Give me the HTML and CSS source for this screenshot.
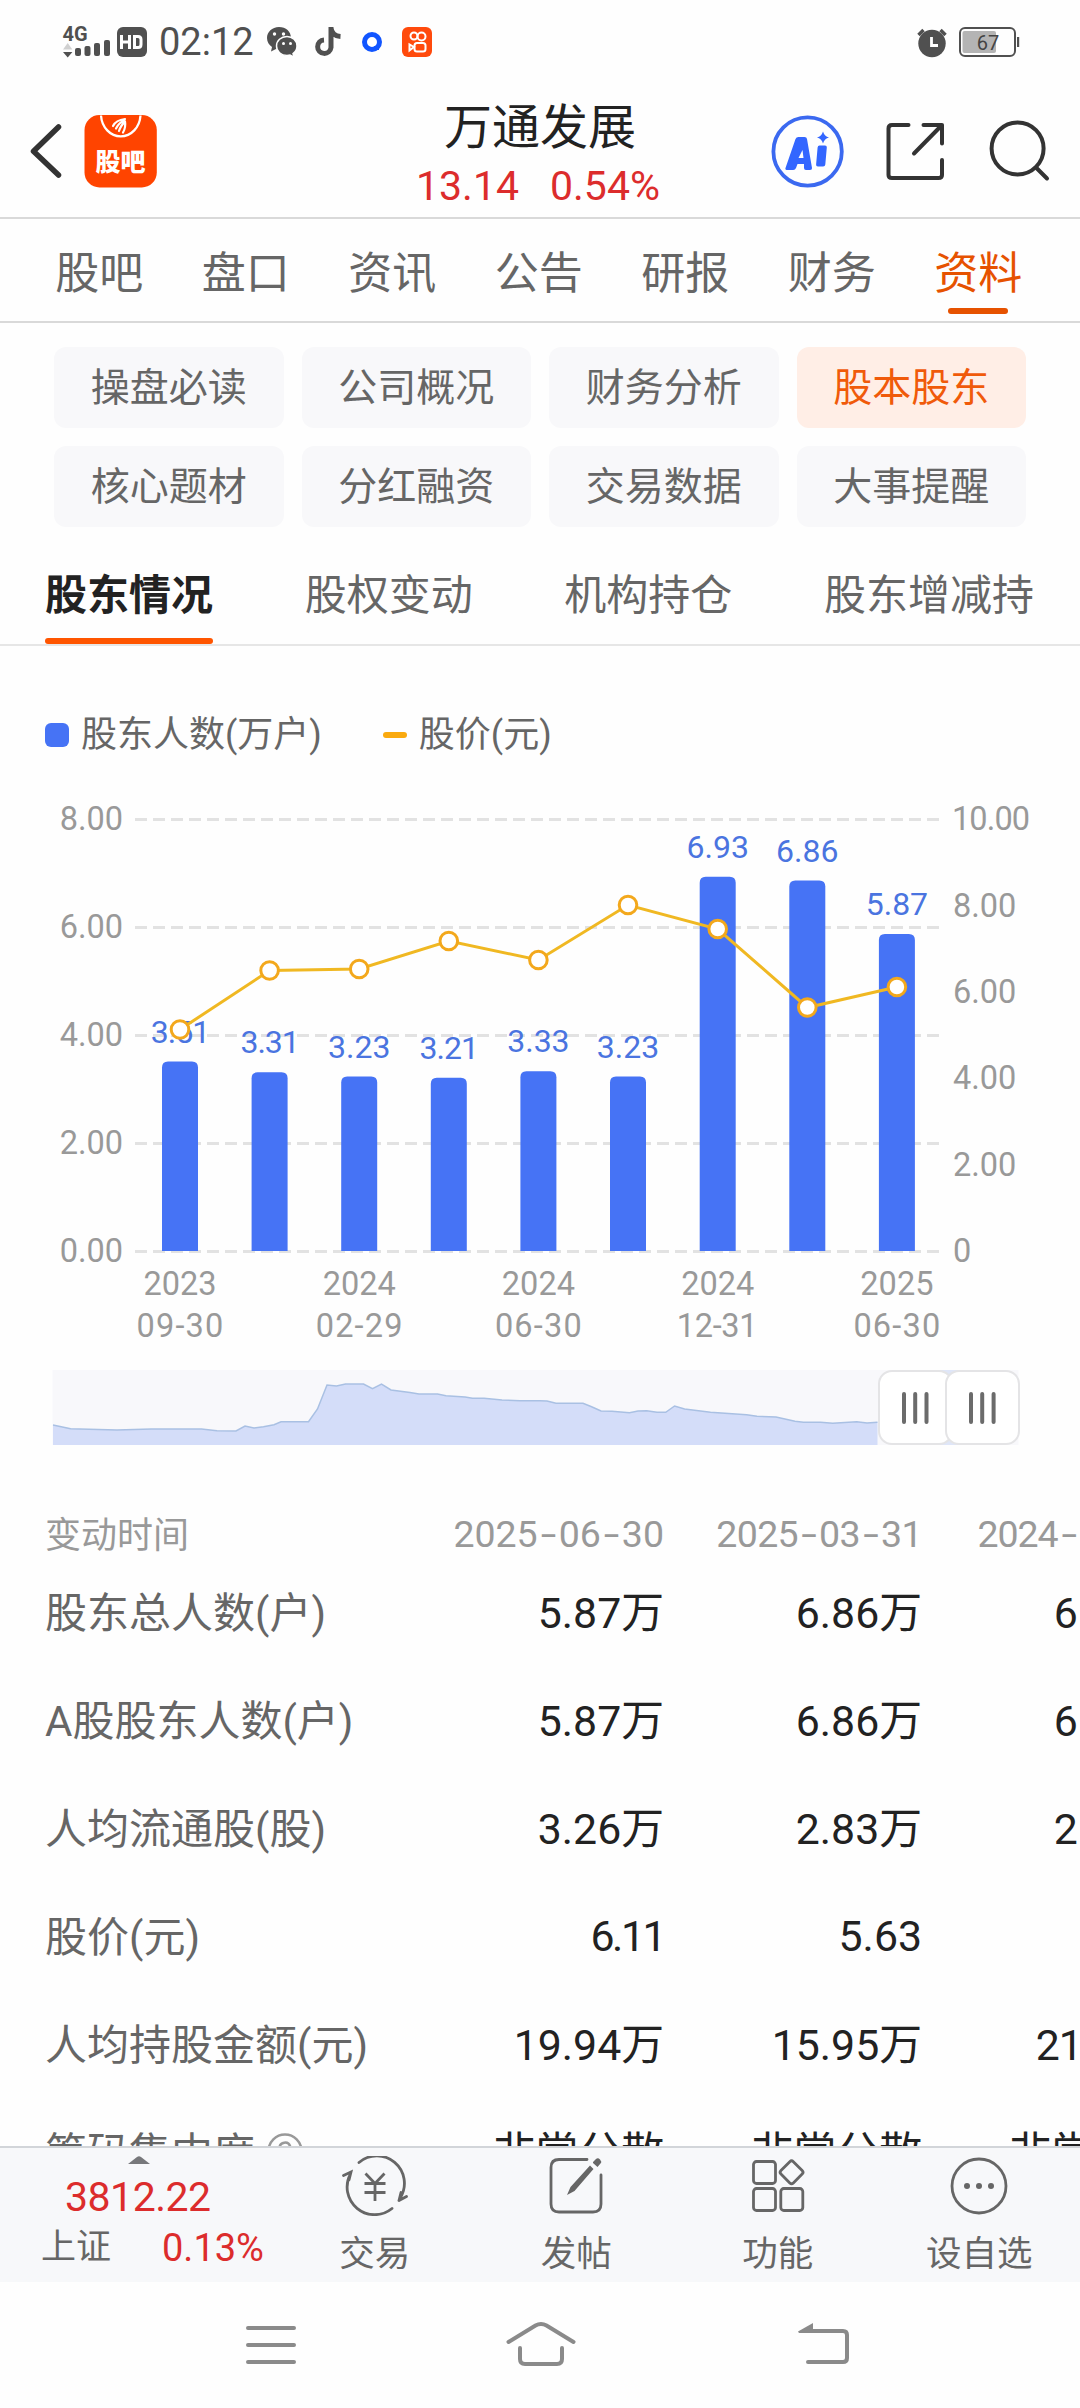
FILE: index.html
```html
<!DOCTYPE html>
<html lang="zh-CN">
<head>
<meta charset="utf-8">
<title>万通发展 股东情况</title>
<link rel="stylesheet" href="styles.css">
</head>
<body>
<div class="screen">
  <div class="status">
    <svg class="status-left" width="90" height="40" viewBox="60 22 90 40">
      <text class="net" x="62.500" y="41">4G</text>
      <path d="M63 49.500l4.700-6.500 4.700 6.500z" fill="#d0d0d0"/><path d="M63 52h9.400l-4.700 5.500z" fill="#505050"/>
      <g fill="#505050"><rect x="75" y="48" width="6" height="8" rx="2"/><rect x="84.500" y="46" width="6" height="10" rx="2"/><rect x="94" y="43" width="6" height="13" rx="2"/><rect x="104" y="40" width="6" height="16" rx="2"/><rect x="117" y="27" width="30" height="30" rx="6"/></g>
      <path d="M121.500 35v14M129.500 35v14M121.500 42h8M134.500 36.500h3.500q3 0 3 3v5q0 3-3 3h-3.500z" fill="none" stroke="#fff" stroke-width="3"/>
    </svg>
    <span class="clock">02:12</span>
    <svg class="apps" width="170" height="40" viewBox="264 22 170 40">
      <g fill="#505050">
        <path d="M279 27c-7 0-12 5-12 11 0 4 2 7 5 9l-1 4.500 5-2.500 3 .5c7 0 12-5 12-11.500S286 27 279 27z"/>
        <path d="M287 36.500c-6 0-10.500 4.200-10.500 9.500s4.500 9.500 10.500 9.500l3-.4 4 2-1-3.500c2.500-1.800 4-4.500 4-7.600 0-5.300-4.500-9.500-10-9.500z" stroke="#fff" stroke-width="1.500"/>
      </g>
      <g fill="#fff"><circle cx="274.500" cy="34" r="1.700"/><circle cx="283.500" cy="34" r="1.700"/><circle cx="283.500" cy="43.500" r="1.500"/><circle cx="290.500" cy="43.500" r="1.500"/></g>
      <path d="M331 27v20.500a6.700 6.700 0 1 1-7-7.500M331 28q1 8 9.500 8.500" fill="none" stroke="#505050" stroke-width="5"/>
      <circle cx="372" cy="42" r="7.500" fill="#fff" stroke="#1155ff" stroke-width="5"/><path d="M374 50v-4h5v4z" fill="#1155ff"/>
      <rect x="402" y="27" width="30" height="30" rx="6" fill="#ff4a0c"/>
      <g fill="none" stroke="#fff" stroke-width="2"><circle cx="414" cy="36" r="3.500"/><circle cx="421.500" cy="36.500" r="4"/><rect x="414.500" y="43" width="11" height="8.500" rx="2.500"/><path d="M414 47l-4.500-2.500v6z"/></g>
    </svg>
    <svg class="status-right" width="104" height="40" viewBox="917 22 104 40">
      <circle cx="933" cy="43.500" r="13.700" fill="#505050"/><path d="M919.500 35l5-5M946.500 35l-5-5" stroke="#505050" stroke-width="3.500"/><path d="M932.500 37v8.500h6.500" fill="none" stroke="#fff" stroke-width="2.800"/>
      <rect x="961" y="28" width="55" height="28" rx="5" fill="none" stroke="#505050" stroke-width="2"/><rect x="963.500" y="31" width="33.500" height="22" rx="2" fill="#b4b4b4"/><rect x="1018" y="37" width="2.200" height="10" fill="#505050"/>
      <text class="batt" x="989" y="49.500" text-anchor="middle">67</text>
    </svg>
  </div>

  <header class="head">
    <svg width="130" height="80" viewBox="28 111 130 80">
      <path d="M58.500 127L33.500 151.300l25 23.700" fill="none" stroke="#333" stroke-width="5.500" stroke-linecap="round" stroke-linejoin="round"/>
      <rect x="84.500" y="115" width="72.300" height="72.500" rx="15" fill="#ff4400"/>
      <path d="M101 115.500a19.800 22.500 0 0 0 39.500 0" fill="none" stroke="#fff" stroke-width="2.300"/>
      <path d="M113 126q3-6 12-7M116 128.500q3-6 8.500-8M119 131q2-6 6-9M123 132.500q3-5 2-11" fill="none" stroke="#fff" stroke-width="2.200" stroke-linecap="round"/>
      <text class="logo" x="120.500" y="171" text-anchor="middle">股吧</text>
    </svg>
    <div class="quote">
      <h1>万通发展</h1>
      <p><span>13.14</span><span>0.54%</span></p>
    </div>
    <svg class="tools" width="282" height="80" viewBox="771 111 282 80">
      <circle cx="808.600" cy="151.500" r="34.200" fill="none" stroke="#3b69f0" stroke-width="3.800"/>
      <path d="M786.500 168l10-29q.8-2 3-2h6q2.200 0 2.500 2l5 29q.3 2-2 2h-4q-2 0-2-2v-4h-6.500l-1.500 4q-.8 2-2.800 2h-5.500q-3 0-2.200-2zM799.500 158h5l-1-8z" fill="#3366ff" fill-rule="evenodd"/>
      <path d="M820.500 145.500h5.500q2 0 1.800 2l-1.500 17q-.2 2-2.200 2h-5.200q-2 0-1.800-2l1.500-17q.2-2 1.900-2zM824 131.500q1.500 5 6 6-4.500 1-6 6-1.500-5-6-6 4.500-1 6-6z" fill="#3366ff"/>
      <g fill="none" stroke="#333" stroke-width="4" stroke-linecap="round" stroke-linejoin="round">
        <path d="M909.500 125H893q-3.500 0-3.500 3.500V175q0 3 3.500 3h46.500q3.500 0 3.500-3v-15M924.500 125H943v18.500M943 125l-28 28.500"/>
        <circle cx="1018.600" cy="148.500" r="26"/><path d="M1037.500 168l10.500 10.500"/>
      </g>
    </svg>
  </header>

  <nav class="tabs"><a>股吧</a><a>盘口</a><a>资讯</a><a>公告</a><a>研报</a><a>财务</a><a class="on">资料</a></nav>

  <nav class="chips"><a>操盘必读</a><a>公司概况</a><a>财务分析</a><a class="on">股本股东</a><a>核心题材</a><a>分红融资</a><a>交易数据</a><a>大事提醒</a></nav>

  <nav class="subtabs"><a class="on">股东情况</a><a>股权变动</a><a>机构持仓</a><a>股东增减持</a></nav>

  <div class="legend"><i class="sq"></i><span>股东人数(万户)</span><i class="ln"></i><span>股价(元)</span></div>

  <svg class="chart" width="1080" height="690" viewBox="0 770 1080 690">
    <path class="grid" d="M135 819.500H940M135 927.500H940M135 1035.500H940M135 1143.500H940M135 1251.500H940"/>
    <g class="bars">
      <path d="M162 1251v-183.500q0-6 6-6h24q6 0 6 6V1251z"/>
      <path d="M251.600 1251v-172.700q0-6 6-6h24q6 0 6 6V1251z"/>
      <path d="M341.200 1251v-168.400q0-6 6-6h24q6 0 6 6V1251z"/>
      <path d="M430.800 1251v-167.300q0-6 6-6h24q6 0 6 6V1251z"/>
      <path d="M520.400 1251v-173.800q0-6 6-6h24q6 0 6 6V1251z"/>
      <path d="M610 1251v-168.400q0-6 6-6h24q6 0 6 6V1251z"/>
      <path d="M699.700 1251v-368.200q0-6 6-6h24q6 0 6 6V1251z"/>
      <path d="M789.300 1251v-364.400q0-6 6-6h24q6 0 6 6V1251z"/>
      <path d="M878.900 1251v-311q0-6 6-6h24q6 0 6 6V1251z"/>
    </g>
    <g class="val">
      <text class="one" x="180" y="1042.500">3.51</text><text class="one" x="269.600" y="1052.500">3.31</text><text x="359.200" y="1058">3.23</text><text class="one" x="448.800" y="1059">3.21</text><text x="538.400" y="1052">3.33</text><text x="628" y="1058">3.23</text><text x="717.700" y="858">6.93</text><text x="807.300" y="861.500">6.86</text><text x="896.900" y="915">5.87</text>
    </g>
    <path class="price" d="M180 1029.500L269.600 970.500 359.200 969 448.800 941 538.400 960 628 905 717.700 929 807.300 1007.500 896.900 987"/>
    <g class="dots"><circle cx="180" cy="1029.500" r="8.800"/><circle cx="269.600" cy="970.500" r="8.800"/><circle cx="359.200" cy="969" r="8.800"/><circle cx="448.800" cy="941" r="8.800"/><circle cx="538.400" cy="960" r="8.800"/><circle cx="628" cy="905" r="8.800"/><circle cx="717.700" cy="929" r="8.800"/><circle cx="807.300" cy="1007.500" r="8.800"/><circle cx="896.900" cy="987" r="8.800"/></g>
    <g class="axis end"><text x="123" y="830">8.00</text><text x="123" y="938">6.00</text><text x="123" y="1046">4.00</text><text x="123" y="1154">2.00</text><text x="123" y="1262">0.00</text></g>
    <g class="axis"><text class="ten" x="952" y="830">10.00</text><text x="953" y="916.500">8.00</text><text x="953" y="1003">6.00</text><text x="953" y="1089">4.00</text><text x="953" y="1175.500">2.00</text><text x="953" y="1262">0</text></g>
    <g class="axis mid">
      <text x="180" y="1295">2023</text><text x="359.200" y="1295">2024</text><text x="538.400" y="1295">2024</text><text x="717.700" y="1295">2024</text><text x="896.900" y="1295">2025</text>
      <g class="md"><text x="180.500" y="1337">09-30</text><text x="359.700" y="1337">02-29</text><text x="538.900" y="1337">06-30</text><text class="one" x="717" y="1337">12-31</text><text x="897.400" y="1337">06-30</text></g>
    </g>
    <rect x="52.500" y="1370" width="966" height="75" fill="#f8f8fb"/>
    <path d="M53 1445V1425l17.600 3.700 46.400 1.300 34.500-1h50l15.500 1.700 19 .3 9-5 9 2 9.500-1.300 10.500-2 7-3h27.500l9-12.700 9.500-24 9.500 1 9-2h18l9 4.700 9-4.700 9.500 6 19 2.500 9 1.500h18.500l8.500 1.700 19 1.300 7.500 1.300h11.500L502 1400l18 .7h20l7 .3 9 2.300h27l8.600 3.400 9.400 4.300 11 .3 17.500 1.400 8.500-1.700 8.700-.3 10.300 1.600h8.700l8.900-6.300 10 3 25.900 3.300 36.100 2.400 10.400 1.600 19 .7 19 4.300 8.400 1h17.200l12.100 1 24.100-1.600 10.200 1.300 10.500-.7V1445z" fill="#d4ddf9"/>
    <path d="M53 1425l17.600 3.700 46.400 1.300 34.500-1h50l15.500 1.700 19 .3 9-5 9 2 9.500-1.300 10.500-2 7-3h27.500l9-12.700 9.500-24 9.500 1 9-2h18l9 4.700 9-4.700 9.500 6 19 2.500 9 1.500h18.500l8.500 1.700 19 1.300 7.500 1.300h11.500L502 1400l18 .7h20l7 .3 9 2.300h27l8.600 3.400 9.400 4.300 11 .3 17.500 1.400 8.500-1.700 8.700-.3 10.300 1.600h8.700l8.900-6.300 10 3 25.900 3.300 36.100 2.400 10.400 1.600 19 .7 19 4.300 8.400 1h17.200l12.100 1 24.100-1.600 10.200 1.300 10.500-.7" fill="none" stroke="#a9c0e3" stroke-width="1.500"/>
    <rect x="915" y="1370" width="68" height="75" fill="#dfe6f8"/>
    <rect class="grip" x="879" y="1371" width="73" height="73" rx="13"/><rect class="grip" x="946" y="1371" width="73" height="73" rx="13"/>
    <path d="M904 1394v28M915.200 1394v28M926.500 1394v28M971 1394v28M982.200 1394v28M993.600 1394v28" stroke="#6b6b6b" stroke-width="4" stroke-linecap="round"/>
  </svg>

  <div class="table">
    <div class="row th"><span>变动时间</span><b>2025<i>-</i>06<i>-</i>30</b><b class="one">2025<i>-</i>03<i>-</i>31</b><b class="tight">2024<i>-</i>12<i>-</i>31</b></div>
    <div class="row"><span>股东总人数(户)</span><b>5.87万</b><b>6.86万</b><b>6.93万</b></div>
    <div class="row"><span>A股股东人数(户)</span><b>5.87万</b><b>6.86万</b><b>6.93万</b></div>
    <div class="row"><span>人均流通股(股)</span><b>3.26万</b><b>2.83万</b><b>2.80万</b></div>
    <div class="row"><span>股价(元)</span><b class="num ones">6.11</b><b class="num">5.63</b><b class="num">7.45</b></div>
    <div class="row"><span>人均持股金额(元)</span><b>19.94万</b><b>15.95万</b><b class="tight">21.00万</b></div>
    <div class="row"><span>筹码集中度<svg width="36" height="36" viewBox="0 0 36 36"><circle cx="18" cy="18" r="16.500"/><path d="M12.500 15a5.500 5.500 0 1 1 8 5q-2.500 1.200-2.500 4M18 26.500v1.500"/></svg></span><b>非常分散</b><b>非常分散</b><b>非常分散</b></div>
  </div>

  <footer class="dock">
    <div class="index">
      <svg width="22" height="8" viewBox="0 0 22 8"><path d="M0 8L9 1q2-1.500 4 0l9 7z" fill="#77787b"/></svg>
      <strong>3812.22</strong>
      <p><span>上证</span><em>0.13%</em></p>
    </div>
    <a><svg width="68" height="60" viewBox="-34 -30 68 60"><path d="M-16-23.500A27.500 27.500 0 0 1 25.500 11.500M24 14.500l7.500-4M24 14.500l2-8M17 22.500A27.500 27.500 0 0 1-24.500-12M-31.500-10.500l7.500-3.500-2 8"/><path class="sq-cap" d="M-9.500-12.500L0-2.500 9.500-12.500M0-2.500V15M-10.500-2.500h21M-10.500 6.500h21"/></svg>交易</a>
    <a><svg width="68" height="60" viewBox="-34 -30 68 60"><path d="M11-26.500H-17q-8 0-8 8V18q0 8 8 8H17q8 0 8-8V-11"/><path d="M-9 9l3.500-8L14-20.500l3.500 3.500L-1.500 5zM17-24l3-3q2-1.500 4 .5t.5 4l-3 3.500-4.500-4z" class="fill"/></svg>发帖</a>
    <a><svg width="68" height="60" viewBox="-34 -30 68 60"><rect x="-24.500" y="-24.500" width="22" height="22" rx="3"/><rect x="-24.500" y="2.500" width="22" height="22" rx="3"/><rect x="2.800" y="2.500" width="22" height="22" rx="3"/><rect x="4.800" y="-22.500" width="17.500" height="17.500" rx="2.500" transform="rotate(45 13.500 -13.700)"/></svg>功能</a>
    <a><svg width="68" height="60" viewBox="-34 -30 68 60"><circle r="27"/><g class="fill"><circle cx="-12" r="3"/><circle r="3"/><circle cx="12" r="3"/></g></svg>设自选</a>
  </footer>

  <div class="sysnav">
    <svg width="60" height="50" viewBox="241 2320 60 50"><path d="M248 2328h46M248 2345h46M248 2362h46"/></svg>
    <svg width="80" height="50" viewBox="501 2320 80 50"><path d="M508.500 2342l27-16.500q5.500-3 11 0L573.500 2342M520 2348v11q0 5 5 5h32q5 0 5-5v-11"/></svg>
    <svg width="60" height="50" viewBox="793 2320 60 50"><path d="M808 2362h35q4 0 4-4v-23q0-4-4-4h-36"/><path d="M798 2331.500l15-8.500v10h-14z" class="fill"/></svg>
  </div>
</div>
</body>
</html>
```
FILE: styles.css
```css
* { box-sizing: border-box; margin: 0; padding: 0; }
body { width: 1080px; background: #fefefe; font-family: Roboto, "Noto Sans CJK SC", sans-serif; color: #666; }
svg { display: block; flex: none; }
i, em { font-style: normal; }
.screen { width: 1080px; height: 2408px; overflow: hidden; display: flex; flex-direction: column; }
.screen > * { flex: none; }

.status { height: 84px; padding: 0 60px; display: flex; align-items: center; color: #505050; }
.net { font: 700 20px Roboto, sans-serif; fill: #505050; }
.clock { width: 94px; margin-left: 9px; font-size: 38px; line-height: 40px; }
.apps { margin-left: 11px; }
.status-right { margin-left: auto; }
.batt { font: 400 20px Roboto, sans-serif; fill: #444; }

.head { height: 135px; padding: 0 28px; display: grid; grid-template-columns: 282px 1fr 282px; align-items: center; border-bottom: 2px solid #d9d9d9; }
.logo { font: 900 25px "Noto Sans CJK SC", sans-serif; fill: #fff; }
.quote { text-align: center; margin-top: 13px; }
.quote h1 { font-size: 48px; line-height: 58px; font-weight: 400; color: #222; }
.quote p { display: flex; justify-content: center; gap: 31px; margin-left: -4px; font-size: 41px; line-height: 58px; color: #dc2c2c; }

.tabs { height: 104px; padding: 0 26px; display: grid; grid-template-columns: repeat(7, 146.500px); border-bottom: 2px solid #d9d9d9; font-size: 44px; line-height: 110px; text-align: center; }
.tabs a { display: flex; flex-direction: column; align-items: center; }
.tabs .on { color: #e65200; }
.tabs .on::after { content: ""; width: 60px; height: 6px; margin-top: -21px; border-radius: 3px; background: #e65200; }

.chips { padding: 24px 54px 0; display: grid; grid-template-columns: repeat(4, 1fr); gap: 18px; }
.chips a { height: 81px; line-height: 82px; border-radius: 12px; background: #f8f8fa; font-size: 39px; text-align: center; }
.chips .on { background: #ffeee6; color: #f05a0a; }

.subtabs { height: 119px; padding: 0 46px 0 45px; display: flex; justify-content: space-between; border-bottom: 2px solid #e6e6e6; font-size: 42px; line-height: 137px; }
.subtabs a { height: 117px; display: flex; flex-direction: column; overflow: visible; }
.subtabs .on { font-weight: 700; color: #222; }
.subtabs .on::after { content: ""; height: 6px; margin-top: -26px; border-radius: 3px; background: #ff5500; }

.legend { height: 124px; padding: 54px 45px 0; display: flex; align-items: center; font-size: 36px; line-height: 50px; }
.legend .sq { width: 24px; height: 24px; margin-right: 12px; border-radius: 6px; background: #4673f5; }
.legend .ln { width: 24px; height: 6px; margin: 0 12px 0 61px; border-radius: 3px; background: #faaa0f; }

.grid { stroke: #e2e2e2; stroke-width: 3; stroke-dasharray: 12 6; }
.bars { fill: #4673f5; }
.val { font-size: 32px; fill: #4a74e0; text-anchor: middle; }
.val .one { letter-spacing: -1px; }
.price { fill: none; stroke: #f0b822; stroke-width: 3; }
.dots { fill: #fff; stroke: #f3a81c; stroke-width: 3; }
.axis { font-size: 32.500px; fill: #999; }
.axis .ten { letter-spacing: -.900px; }
.end { text-anchor: end; }
.mid { text-anchor: middle; }
.md { letter-spacing: 1.200px; }
.md .one { letter-spacing: -.300px; }
.grip { fill: #fff; stroke: #e4e4e6; stroke-width: 2; }

.table { height: 686px; padding-top: 46px; overflow: hidden; }
.row { height: 108px; display: grid; grid-template-columns: 405px 259px 258px 258px; align-items: center; font-size: 42px; white-space: nowrap; }
.row span { padding: 0 0 6px 45px; display: flex; align-items: center; }
.row b { padding-bottom: 6px; font-weight: 400; font-size: 42.800px; color: #222; text-align: right; }
.row .num { padding-bottom: 0; }
.row .ones { letter-spacing: -2.500px; }
.row .tight { letter-spacing: -1px; }
.row svg { margin: 3px 0 0 12px; fill: none; stroke: #999; stroke-width: 2.500; }
.row.th { height: 52px; font-size: 36px; }
.th span { padding-bottom: 4px; color: #999; }
.row.th b { padding: 0; font-size: 37.500px; color: #999; }
.th .one { letter-spacing: -.600px; }
.th i { display: inline-block; width: 21px; text-align: center; transform: scaleX(1.500); }

.dock { height: 136px; display: flex; background: #f7f8fa; border-top: 2px solid #d2d5d9; }
.index { width: 274px; padding-top: 8px; }
.index svg { margin-left: 128px; }
.index strong { display: block; padding-left: 65px; font-weight: 400; font-size: 41px; line-height: 66px; color: #dc2c2c; letter-spacing: -.500px; }
.index p { display: flex; align-items: center; gap: 51px; padding: 1px 0 0 41px; font-size: 35px; line-height: 34px; }
.index em { font-size: 38px; color: #dc2c2c; }
.dock a { flex: 1; padding-top: 8px; display: flex; flex-direction: column; align-items: center; font-size: 35.500px; line-height: 76px; }
.dock a svg { fill: none; stroke: #666; stroke-width: 2.800; stroke-linecap: round; }
.dock .sq-cap { stroke-linecap: butt; }
.dock .fill, .sysnav .fill { fill: #666; stroke: none; }

.sysnav { height: 126px; padding: 38px 227px 0 241px; display: grid; grid-template-columns: 260px 292px 60px; }
.sysnav svg { fill: none; stroke: #8a8a8a; stroke-width: 4; stroke-linecap: round; }
.sysnav .fill { fill: #8a8a8a; }
```
